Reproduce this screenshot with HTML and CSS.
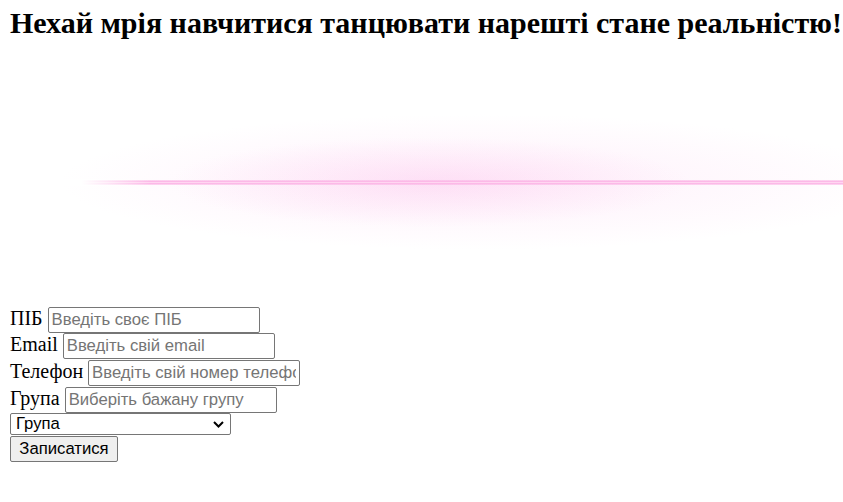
FILE: index.html
```html
<!DOCTYPE html>
<html lang="uk">
<head>
<meta charset="utf-8">
<title>Танці</title>
<link rel="stylesheet" href="styles.css">
</head>
<body>
<h2 class="title">Нехай мрія навчитися танцювати нарешті стане реальністю!</h2>
<div class="glow" aria-hidden="true"></div>
<form class="signup">
  <div class="row"><label for="name">ПІБ</label><input class="field" id="name" type="text" placeholder="Введіть своє ПІБ"></div>
  <div class="row"><label for="email">Email</label><input class="field" id="email" type="email" placeholder="Введіть свій email"></div>
  <div class="row"><label for="phone">Телефон</label><input class="field" id="phone" type="tel" placeholder="Введіть свій номер телефону"></div>
  <div class="row"><label for="group">Група</label><input class="field" id="group" type="text" placeholder="Виберіть бажану групу"></div>
  <div class="row row-select">
    <span class="select-wrap">
      <select class="picker"><option>Група</option><option>Початківці</option><option>Середній рівень</option><option>Професіонали</option></select>
      <svg class="chevron" width="11" height="7" viewBox="0 0 11 7" aria-hidden="true"><polyline points="1,1 5.5,5.5 10,1" fill="none" stroke="#000" stroke-width="2"/></svg>
    </span>
  </div>
  <div class="row row-btn"><button class="submit" type="submit">Записатися</button></div>
</form>
</body>
</html>
```
FILE: styles.css
```css
html {
  overflow: hidden;
}
body {
  margin: 0;
  padding: 6px 0 0 10px;
  background: #fff;
  color: #000;
  font-family: "Liberation Serif", "Times New Roman", serif;
  font-size: 20px;
}
.title {
  margin: 0;
  font-size: 30px;
  font-weight: bold;
  white-space: nowrap;
}
.glow {
  margin-left: -10px;
  height: 266.8px;
  background:
    linear-gradient(to right, #fff 82px, rgba(255,255,255,0) 150px) 0 139px / 100% 7px no-repeat,
    linear-gradient(to bottom, rgba(250,170,225,0.25), #fbb2e5 25%, #ffd6f1 50%, #fbb2e5 75%, rgba(250,170,225,0.25)) 0 140px / 100% 5px no-repeat,
    radial-gradient(ellipse 260px 45px at 430px 142px, rgba(252,175,230,0.28), rgba(252,175,230,0) 100%),
    radial-gradient(ellipse 420px 68px at 480px 142px, rgba(252,190,236,0.22), rgba(252,195,238,0.12) 55%, rgba(255,255,255,0) 100%);
}
.signup {
  margin: 0;
}
.row {
  display: flex;
  align-items: baseline;
  gap: 5px;
  height: 26.667px;
}
.row-select {
  height: 23px;
  align-items: flex-start;
}
.row-btn {
  height: 26px;
  align-items: flex-start;
}
.field {
  box-sizing: border-box;
  width: 212px;
  height: 26px;
  margin: 0;
  padding: 1px 3px;
  border: 1px solid #767676;
  border-radius: 2px;
  font-family: "Liberation Sans", Arial, sans-serif;
  font-size: 16.7px;
  color: #000;
  background: #fff;
}
.field::placeholder {
  color: #757575;
}
.select-wrap {
  position: relative;
  display: block;
  width: 221px;
  height: 22px;
}
.picker {
  -webkit-appearance: none;
  appearance: none;
  box-sizing: border-box;
  display: block;
  width: 221px;
  height: 22px;
  margin: 0;
  padding: 0 24px 0 5px;
  font-family: "Liberation Sans", Arial, sans-serif;
  font-size: 16.7px;
  line-height: 20px;
  color: #000;
  background: #fff;
  border: 1px solid #767676;
  border-radius: 2px;
}
.chevron {
  position: absolute;
  left: 203px;
  top: 8px;
  pointer-events: none;
}
.submit {
  box-sizing: border-box;
  width: 108px;
  height: 26px;
  margin: 0;
  padding: 1px 6px;
  font-family: "Liberation Sans", Arial, sans-serif;
  font-size: 16.7px;
  color: #000;
  background: #efefef;
  border: 1px solid #767676;
  border-radius: 2px;
}
```
